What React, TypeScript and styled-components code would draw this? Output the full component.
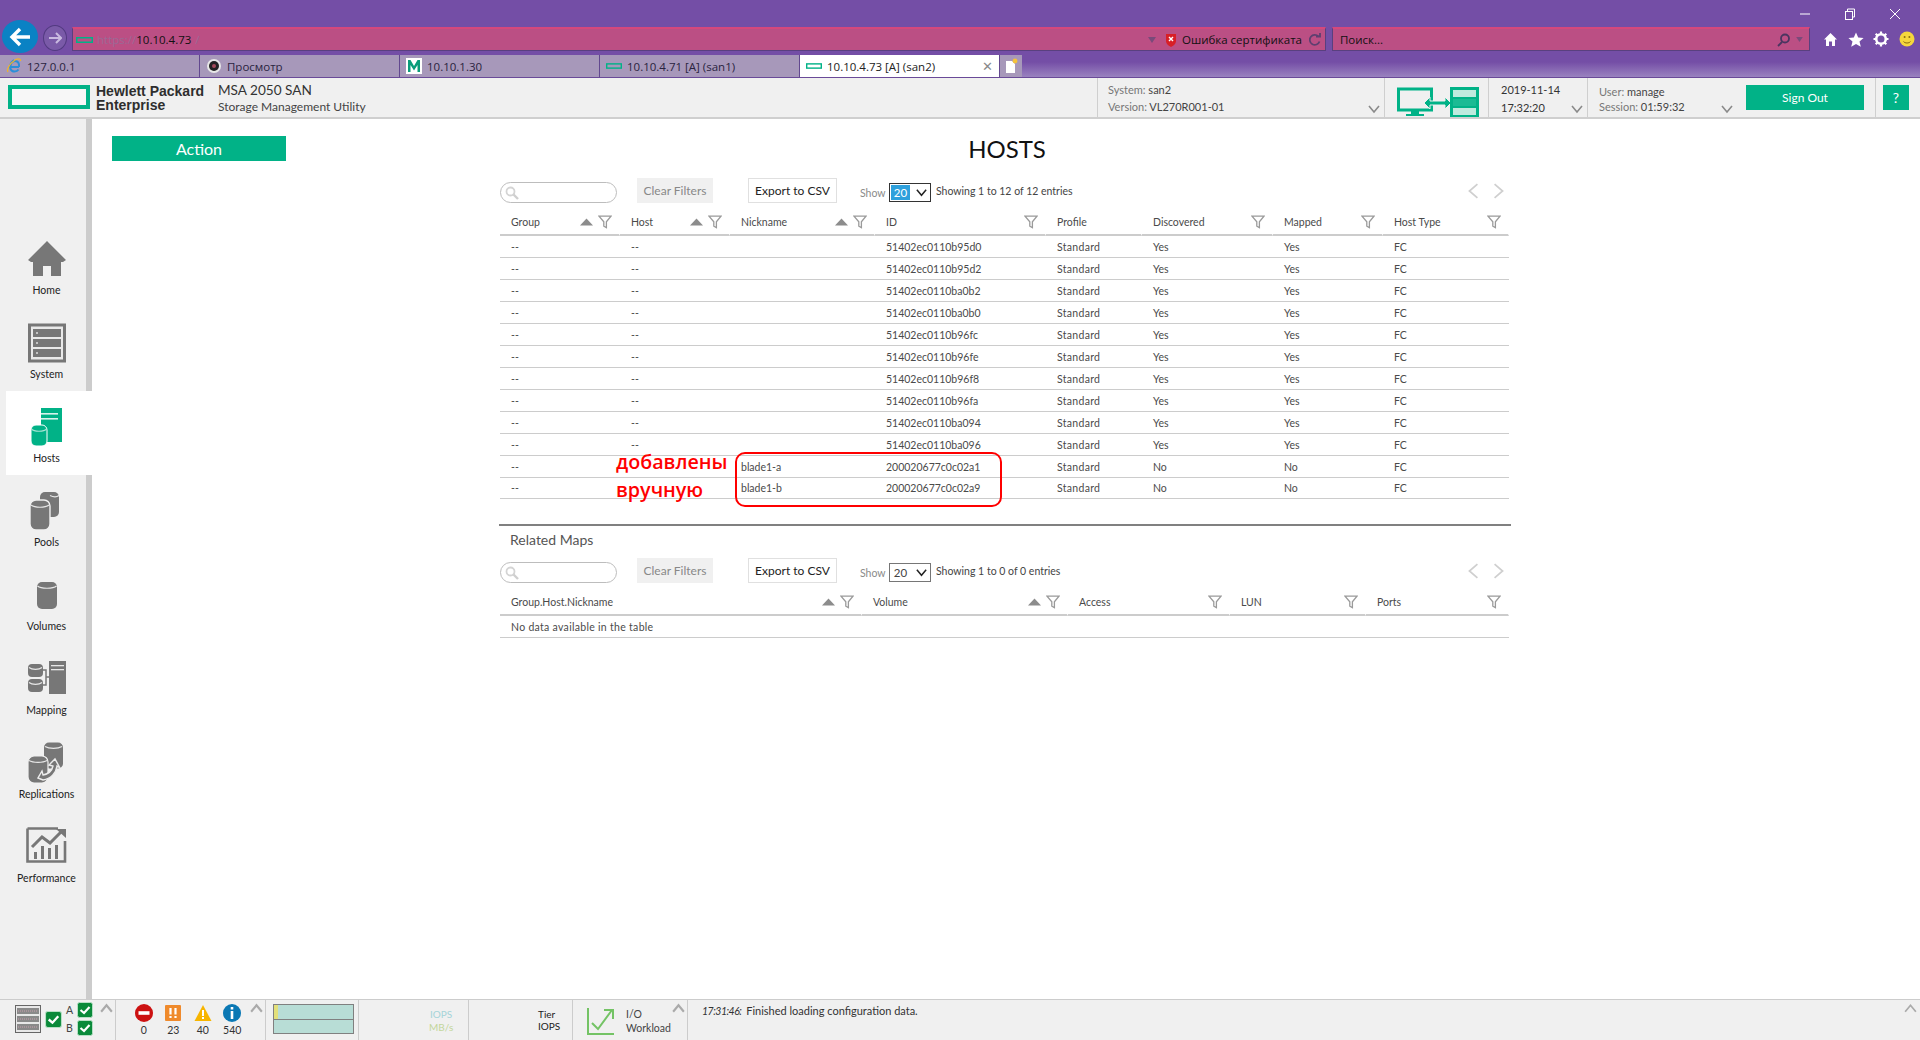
import React from 'react';
import { styled, createGlobalStyle } from 'styled-components';

const GREEN = '#01b287';

const GlobalStyle = createGlobalStyle`
    html, body {
        margin: 0;
        padding: 0;
        background: #fff;
        font-family: Lato, "Liberation Sans", sans-serif;
    }
    * { box-sizing: border-box; }
`;

/* ---------- small drawings ---------- */

function Chevron({ dir = 'down', size = 14, color = '#8a8a8a', sw = 1.6 }: { dir?: 'down' | 'up' | 'left' | 'right'; size?: number; color?: string; sw?: number }) {
    const paths = { down: 'M2 4 L7 10 L12 4', up: 'M2 10 L7 4 L12 10', left: 'M10 1 L3 7 L10 13', right: 'M4 1 L11 7 L4 13' };
    return <svg width={size} height={size} viewBox="0 0 14 14" fill="none" stroke={color} strokeWidth={sw}><path d={paths[dir]} /></svg>;
}

function HpeMark({ w = 17, h = 6 }: { w?: number; h?: number }) {
    return <svg width={w} height={h} viewBox="0 0 17 6"><rect x="0.75" y="0.75" width="15.5" height="4.5" fill="none" stroke={GREEN} strokeWidth="1.5" /></svg>;
}

function Filter() {
    return (
        <svg width="14" height="14" viewBox="0 0 14 14" fill="#fff" stroke="#9a9a9a" strokeWidth="1.3">
            <path d="M1 1.2 H13 L8.4 6.8 V12.6 L5.8 11.2 V6.8 Z" />
        </svg>
    );
}

function SortUp() {
    return <svg width="13" height="8" viewBox="0 0 13 8"><path d="M6.5 0.5 L13 7.5 H0 Z" fill="#8c8c8c" /></svg>;
}

function Magnifier() {
    return (
        <svg width="14" height="14" viewBox="0 0 14 14" fill="none">
            <circle cx="5.5" cy="5.5" r="4" stroke="#d4d4d4" strokeWidth="1.8" />
            <path d="M8.5 8.5 L13 13" stroke="#cfcfcf" strokeWidth="2.4" />
        </svg>
    );
}

const NavIcons: Record<string, React.ReactNode> = {
    Home: (
        <svg width="40" height="40" viewBox="0 0 40 40" fill="#777">
            <path d="M20 2 L39 21 L36 23 H34 V37 H24 V27 H16 V37 H6 V23 H4 L1 21 Z" />
        </svg>
    ),
    System: (
        <svg width="40" height="40" viewBox="0 0 40 40">
            <rect x="1" y="0.5" width="38" height="39" fill="#777" />
            <rect x="4" y="3.5" width="32" height="33" fill="#e9e9e9" />
            {[6, 16, 26].map((y) => (
                <g key={y}>
                    <rect x="6" y={y} width="28" height="8" fill="#777" />
                    <circle cx="10" cy={y + 4} r="1" fill="#ddd" />
                </g>
            ))}
        </svg>
    ),
    Hosts: (
        <svg width="40" height="40" viewBox="0 0 40 40">
            <rect x="14" y="1" width="21" height="34" fill={GREEN} />
            <rect x="14" y="6" width="17" height="1.6" fill="#d8f3ec" />
            <rect x="14" y="11" width="17" height="1.6" fill="#d8f3ec" />
            <rect x="4" y="18" width="16" height="21" rx="5" fill={GREEN} stroke="#fff" strokeWidth="1" />
            <path d="M4.5 22 C7 25 17 25 19.5 22" fill="none" stroke="#a5e3d4" strokeWidth="1.2" />
        </svg>
    ),
    Pools: (
        <svg width="40" height="40" viewBox="0 0 40 40" fill="#777">
            <rect x="13" y="1" width="19" height="25" rx="5" />
            <rect x="3" y="9" width="20" height="30" rx="6" stroke="#f0f0f0" strokeWidth="1.4" />
            <path d="M4 14 C8 17 18 17 22 14" fill="none" stroke="#e8e8e8" strokeWidth="1.2" />
            <path d="M23 4.5 C26 6 30 6 32 4.5" fill="none" stroke="#e8e8e8" strokeWidth="1.2" />
        </svg>
    ),
    Volumes: (
        <svg width="40" height="40" viewBox="0 0 40 40" fill="#777">
            <rect x="10" y="7" width="20" height="27" rx="5" />
            <path d="M10.5 11 C14 14 26 14 29.5 11" fill="none" stroke="#e8e8e8" strokeWidth="1.2" />
        </svg>
    ),
    Mapping: (
        <svg width="40" height="40" viewBox="0 0 40 40" fill="#777">
            <rect x="1" y="5" width="15" height="13" rx="4" />
            <rect x="1" y="20" width="15" height="13" rx="4" />
            <path d="M2 8.5 C5 11 12 11 15 8.5 M2 23.5 C5 26 12 26 15 23.5" fill="none" stroke="#e8e8e8" strokeWidth="1.1" />
            <path d="M16 11 H19 V26 H16 M19 18 H22" fill="none" stroke="#777" strokeWidth="1.5" />
            <rect x="22" y="2" width="17" height="33" />
            <rect x="24" y="6" width="13" height="1.3" fill="#e8e8e8" />
            <rect x="24" y="10" width="13" height="1.3" fill="#e8e8e8" />
        </svg>
    ),
    Replications: (
        <svg width="42" height="42" viewBox="0 0 42 42" fill="#777">
            <rect x="18" y="0.5" width="19" height="26" rx="5" />
            <rect x="2" y="14" width="20" height="27" rx="6" stroke="#f0f0f0" strokeWidth="1.2" />
            <path d="M3 18.5 C7 21 17 21 21 18.5 M19 4.5 C23 7 32 7 36 4.5" fill="none" stroke="#e8e8e8" strokeWidth="1.2" />
            <path d="M12 36 L17 38 C25 37 30 31 31 24 L34 26 L29 17 L23 23 L27 24 C26 29 22 32 17 33 L16 29 Z" fill="#777" stroke="#ececec" strokeWidth="1.4" />
        </svg>
    ),
    Performance: (
        <svg width="42" height="40" viewBox="0 0 42 40">
            <path d="M1.5 1.5 H32 M1.5 1.5 V34.5 H39 V14" fill="none" stroke="#777" strokeWidth="2.6" />
            <rect x="8" y="25" width="3" height="7" fill="#777" />
            <rect x="15" y="19" width="3" height="13" fill="#777" />
            <rect x="22" y="21" width="3" height="11" fill="#777" />
            <rect x="29" y="18" width="3" height="14" fill="#777" />
            <path d="M6 20 L16 10 L24 16 L35 5" fill="none" stroke="#777" strokeWidth="3" />
            <path d="M30 2 H40 V11 Z" fill="#777" />
        </svg>
    ),
};

/* ---------- browser chrome ---------- */

const Page = styled.div`
    width: 1920px;
    height: 1040px;
    display: flex;
    flex-direction: column;
    overflow: hidden;
`;

const BrowserChrome = styled.div`
    height: 78px;
    flex: none;
    background: linear-gradient(#744ea6 0, #744ea6 62px, #9a82bf 77px);
    border-bottom: 1px solid #6a4a98;
`;

const WindowBar = styled.div`
    height: 27px;
    display: flex;
    justify-content: flex-end;
    align-items: center;
    padding: 0 19px 0 0;
    gap: 33px;
    color: #fff;
    font-size: 14px;
`;

const AddressRow = styled.div`
    height: 28px;
    display: flex;
    align-items: flex-start;
    position: relative;
`;

const BackButton = styled.div`
    position: absolute;
    left: 2px;
    top: -7px;
    width: 36px;
    height: 33px;
    border-radius: 50%;
    background: #0a82c4;
    display: flex;
    align-items: center;
    justify-content: center;
`;

const ForwardButton = styled.div`
    position: absolute;
    left: 43px;
    top: -2px;
    width: 24px;
    height: 26px;
    border-radius: 50%;
    background: #7a5aa8;
    border: 1px solid #523a80;
    display: flex;
    align-items: center;
    justify-content: center;
`;

const UrlField = styled.div<{ $width: number; $left: number }>`
    margin-left: ${(p) => p.$left}px;
    width: ${(p) => p.$width}px;
    height: 24px;
    background: #bb4f84;
    border: 1px solid #59407f;
    border-top: 2px solid #d6487c;
    display: flex;
    align-items: center;
    padding: 0 4px 0 3px;
    font-family: "Open Sans", sans-serif;
    font-size: 11.5px;
    color: #111;
`;

const UrlDim = styled.span`
    color: #9a6a96;
    margin-left: 4px;
`;

const Spacer = styled.div`
    flex: 1;
`;

const ToolIcons = styled.div`
    display: flex;
    align-items: center;
    gap: 9.5px;
    margin-left: 13px;
    height: 24px;
`;

const TabRow = styled.div`
    height: 22px;
    display: flex;
`;

const Tab = styled.div<{ $active?: boolean }>`
    width: 200px;
    height: 22px;
    background: ${(p) => (p.$active ? '#fff' : '#a798ba')};
    border-right: 1px solid #62488f;
    display: flex;
    align-items: center;
    gap: 5px;
    padding: 0 3px 0 6px;
    font-family: "Open Sans", sans-serif;
    font-size: 11.5px;
    color: ${(p) => (p.$active ? '#222' : '#2a2340')};
`;

const TabIcon = styled.span`
    width: 16px;
    height: 16px;
    flex: none;
    display: flex;
    align-items: center;
    justify-content: center;
`;

const TabClose = styled.span`
    margin-left: auto;
    margin-right: 3px;
    color: #8a8a8a;
    font-size: 13px;
`;

const NewTab = styled.div`
    width: 22px;
    height: 22px;
    background: #a798ba;
    display: flex;
    align-items: center;
    justify-content: center;
`;

/* ---------- application header ---------- */

const AppHeader = styled.header`
    height: 41px;
    flex: none;
    background: #f0f0f0;
    border-bottom: 2px solid #cfcfcf;
    display: flex;
    color: #444;
`;

const LogoBox = styled.div`
    width: 82px;
    height: 24px;
    margin: 7px 0 0 8px;
    border: 4px solid ${GREEN};
    background: #f7f7f7;
    flex: none;
`;

const BrandText = styled.div`
    margin: 6px 0 0 6px;
    width: 122px;
    font-family: "Liberation Sans", sans-serif;
    font-size: 14px;
    font-weight: 700;
    line-height: 14px;
    color: #2e2e2e;
    flex: none;
`;

const ProductText = styled.div`
    margin-top: 4px;
    flex: 1;
`;

const ProductName = styled.div`
    font-size: 13.6px;
    line-height: 16px;
    color: #333;
`;

const ProductSub = styled.div`
    font-size: 12px;
    line-height: 18px;
    color: #444;
`;

const HeaderCell = styled.div<{ $width: number }>`
    width: ${(p) => p.$width}px;
    flex: none;
    position: relative;
    border-left: 1px solid #cfcfcf;
    font-size: 11px;
    line-height: 17px;
    padding: 3px 0 0 10px;
    white-space: nowrap;
`;

const CellLabel = styled.span`
    color: #777;
`;

const CellChevron = styled.span`
    position: absolute;
    right: 3px;
    bottom: 1px;
    display: flex;
`;

const SignOutCell = styled.div`
    width: 129px;
    flex: none;
    position: relative;
    padding: 7px 0 0 0;
`;

const GreenButton = styled.button<{ $width: number; $height: number; $size: number }>`
    width: ${(p) => p.$width}px;
    height: ${(p) => p.$height}px;
    background: ${GREEN};
    color: #fff;
    border: none;
    padding: 0;
    font-family: inherit;
    font-size: ${(p) => p.$size}px;
    display: block;
`;

const HelpCell = styled.div`
    width: 45px;
    flex: none;
    border-left: 1px solid #cfcfcf;
    padding: 7px 0 0 7px;
`;

/* ---------- body ---------- */

const Body = styled.div`
    flex: 1;
    display: flex;
    min-height: 0;
`;

const Sidebar = styled.nav`
    width: 92px;
    flex: none;
    background: #f0f0f0;
    border-right: 6px solid #ccc;
    padding: 104px 0 0 6px;
`;

const NavItem = styled.div<{ $active?: boolean }>`
    width: 86px;
    height: 84px;
    padding-top: 16px;
    padding-right: 5px;
    display: flex;
    flex-direction: column;
    align-items: center;
    background: ${(p) => (p.$active ? '#fff' : 'transparent')};
    margin-right: -6px;
`;

const NavIconBox = styled.div`
    height: 40px;
    display: flex;
    align-items: center;
    justify-content: center;
`;

const NavLabel = styled.div`
    margin-top: 4px;
    font-size: 10.5px;
    line-height: 14px;
    color: #222;
`;

const Main = styled.main`
    flex: 1;
    display: flex;
    min-width: 0;
`;

const ActionColumn = styled.div`
    width: 407px;
    flex: none;
    padding: 17px 0 0 20px;
`;

const Content = styled.div`
    width: 1012px;
    flex: none;
    position: relative;
`;

const Title = styled.h1`
    margin: 0;
    height: 59px;
    line-height: 60px;
    font-size: 24px;
    font-weight: 400;
    text-align: center;
    color: #111;
    padding-left: 4px;
`;

const Toolbar = styled.div`
    height: 25px;
    display: flex;
    align-items: center;
    padding-left: 1px;
    position: relative;
`;

const SearchPill = styled.div`
    width: 117px;
    height: 21px;
    margin-top: 4px;
    border: 1px solid #bdbdbd;
    border-radius: 11px;
    padding: 3px 0 0 4px;
    display: flex;
    background: #fff;
`;

const ClearFilters = styled.div`
    width: 76px;
    height: 25px;
    margin-left: 20px;
    background: #f0f0f0;
    color: #888;
    font-size: 12px;
    display: flex;
    align-items: center;
    justify-content: center;
`;

const ExportButton = styled.div`
    width: 89px;
    height: 25px;
    margin-left: 35px;
    border: 1px solid #e0e0e0;
    color: #222;
    font-size: 12px;
    display: flex;
    align-items: center;
    justify-content: center;
`;

const ShowLabel = styled.span`
    margin-left: 23px;
    margin-top: 5px;
    color: #8a8a8a;
    font-size: 10.5px;
    width: 29px;
`;

const SelectBox = styled.div<{ $focused?: boolean }>`
    width: 42px;
    height: 19px;
    margin-top: 3px;
    border: 1px solid ${(p) => (p.$focused ? '#333' : '#767676')};
    display: flex;
    align-items: center;
    padding: 1px 0 1px 1px;
    font-size: 11.5px;
    color: #444;
`;

const SelectValue = styled.span<{ $focused?: boolean }>`
    width: 19px;
    height: 100%;
    background: ${(p) => (p.$focused ? '#2ea0dc' : 'transparent')};
    color: ${(p) => (p.$focused ? '#fff' : '#444')};
    display: flex;
    align-items: center;
    justify-content: center;
    margin-right: 5px;
`;

const ShowingText = styled.span`
    margin-left: 5px;
    font-size: 10.5px;
    color: #444;
`;

const Pager = styled.div`
    margin-left: auto;
    margin-right: 5px;
    display: flex;
    gap: 8px;
`;

const Grid = styled.table`
    width: 1009px;
    margin-left: 1px;
    border-collapse: separate;
    border-spacing: 0;
    table-layout: fixed;
    font-size: 10.5px;
    color: #4a4a4a;
`;

const HeadCell = styled.th`
    height: 33px;
    padding: 7px 7px 0 11px;
    border-bottom: 2px solid #ccc;
    border-right: 1px solid #fff;
    font-weight: 400;
    text-align: left;
`;

const HeadInner = styled.div`
    display: flex;
    align-items: center;
    gap: 5px;
`;

const HeadText = styled.span`
    flex: 1;
    white-space: nowrap;
`;

const BodyCell = styled.td<{ $compact?: boolean; $spread?: boolean }>`
    height: ${(p) => (p.$compact ? 21 : 22)}px;
    padding: 0 0 0 11px;
    border-bottom: 1px solid #ccc;
    white-space: nowrap;
    letter-spacing: ${(p) => (p.$spread ? '0.3px' : 'normal')};
`;

const TableWrap = styled.div`
    position: relative;
`;

const Divider = styled.div`
    height: 2px;
    margin-top: 25px;
    background: #808080;
`;

const SectionTitle = styled.div`
    height: 32px;
    line-height: 27px;
    padding-left: 11px;
    font-size: 14px;
    color: #555;
`;

const Highlight = styled.div`
    position: absolute;
    left: 236px;
    top: 333px;
    width: 267px;
    height: 55px;
    border: 2px solid #f00;
    border-radius: 10px;
    pointer-events: none;
`;

const Note = styled.div<{ $top: number }>`
    position: absolute;
    left: 117px;
    top: ${(p) => p.$top}px;
    font-family: "Open Sans", sans-serif;
    font-size: 19.7px;
    font-weight: 600;
    line-height: 26px;
    color: #f00;
`;

/* ---------- status bar ---------- */

const StatusBar = styled.footer`
    height: 41px;
    flex: none;
    background: #f0f0f0;
    border-top: 1px solid #ccc;
    display: flex;
    color: #333;
    font-size: 10.5px;
    position: relative;
`;

const StatusCell = styled.div<{ $width: number }>`
    width: ${(p) => p.$width}px;
    flex: none;
    position: relative;
    border-right: 1px solid #ccc;
    display: flex;
`;

const CornerChevron = styled.span<{ $right: number }>`
    position: absolute;
    right: ${(p) => p.$right}px;
    top: 1px;
    display: flex;
`;

const ControllerColumn = styled.div`
    display: flex;
    flex-direction: column;
    gap: 2px;
    margin: 2px 0 0 4px;
`;

const ControllerRow = styled.div`
    display: flex;
    align-items: center;
    gap: 4px;
    font-size: 10.5px;
    color: #444;
`;

const Alert = styled.div`
    width: 29.5px;
    display: flex;
    flex-direction: column;
    align-items: center;
    padding-top: 4px;
`;

const AlertCount = styled.span`
    margin-top: 1px;
    font-size: 10.5px;
    line-height: 14px;
    color: #333;
`;

const AlertRow = styled.div`
    display: flex;
    margin-left: 13px;
`;

const ChartBox = styled.div`
    width: 81px;
    height: 30px;
    margin: 4px 0 0 7px;
    border: 1px solid #808080;
    background: #b8ddd6;
    position: relative;
    display: flex;
    flex-direction: column;
`;

const ChartHalf = styled.div`
    flex: 1;
    border-bottom: 1px solid #808080;
`;

const ChartTick = styled.div`
    position: absolute;
    left: 0;
    top: 0;
    width: 4px;
    height: 14px;
    background: #e3e07a;
`;

const MetricLegend = styled.div`
    margin: 8px 0 0 70px;
    line-height: 13px;
    font-size: 10px;
    text-align: center;
`;

const MetricLine = styled.div<{ $color: string }>`
    color: ${(p) => p.$color};
`;

const TierText = styled.div`
    margin: 8px 0 0 69px;
    font-size: 10px;
    line-height: 12px;
    color: #222;
`;

const WorkloadText = styled.div`
    margin: 7px 0 0 11px;
    font-size: 10.5px;
    line-height: 14px;
    color: #444;
`;

const Message = styled.div`
    margin: 4px 0 0 14px;
    font-size: 11px;
    line-height: 14px;
    color: #333;
`;

const MessageTime = styled.span`
    font-style: italic;
    font-size: 10.5px;
    letter-spacing: -0.5px;
    margin-right: 2px;
`;

function CheckBadge({ size = 16 }: { size?: number }) {
    return (
        <svg width={size} height={size} viewBox="0 0 16 16">
            <rect x="0.5" y="0.5" width="15" height="15" rx="2" fill="#0a8a3a" stroke="#b7dfc5" />
            <path d="M3.5 8 L7 11 L12.5 5" fill="none" stroke="#fff" strokeWidth="2.2" />
        </svg>
    );
}

/* ---------- data ---------- */

const hostIds = ['51402ec0110b95d0', '51402ec0110b95d2', '51402ec0110ba0b2', '51402ec0110ba0b0', '51402ec0110b96fc', '51402ec0110b96fe', '51402ec0110b96f8', '51402ec0110b96fa', '51402ec0110ba094', '51402ec0110ba096'];

type Column = { title: string; width: number; sort?: boolean; filter?: boolean };

const hostColumns: Column[] = [
    { title: 'Group', width: 120, sort: true, filter: true },
    { title: 'Host', width: 110, sort: true, filter: true },
    { title: 'Nickname', width: 145, sort: true, filter: true },
    { title: 'ID', width: 171, filter: true },
    { title: 'Profile', width: 96 },
    { title: 'Discovered', width: 131, filter: true },
    { title: 'Mapped', width: 110, filter: true },
    { title: 'Host Type', width: 126, filter: true },
];

const mapColumns: Column[] = [
    { title: 'Group.Host.Nickname', width: 362, sort: true, filter: true },
    { title: 'Volume', width: 206, sort: true, filter: true },
    { title: 'Access', width: 162, filter: true },
    { title: 'LUN', width: 136, filter: true },
    { title: 'Ports', width: 143, filter: true },
];

const navItems = ['Home', 'System', 'Hosts', 'Pools', 'Volumes', 'Mapping', 'Replications', 'Performance'];

function TableHead({ columns }: { columns: Column[] }) {
    return (
        <>
            <colgroup>
                {columns.map((c) => <col key={c.title} width={c.width} />)}
            </colgroup>
            <thead>
                <tr>
                    {columns.map((c) => (
                        <HeadCell key={c.title}>
                            <HeadInner>
                                <HeadText>{c.title}</HeadText>
                                {c.sort && <SortUp />}
                                {c.filter && <Filter />}
                            </HeadInner>
                        </HeadCell>
                    ))}
                </tr>
            </thead>
        </>
    );
}

function TableToolbar({ focused, showing }: { focused?: boolean; showing: string }) {
    return (
        <Toolbar>
            <SearchPill><Magnifier /></SearchPill>
            <ClearFilters>Clear Filters</ClearFilters>
            <ExportButton>Export to CSV</ExportButton>
            <ShowLabel>Show</ShowLabel>
            <SelectBox $focused={focused}>
                <SelectValue $focused={focused}>20</SelectValue>
                <Chevron size={13} color="#222" sw={1.6} />
            </SelectBox>
            <ShowingText>{showing}</ShowingText>
            <Pager>
                <Chevron dir="left" size={16} color="#cfcfcf" sw={1.5} />
                <Chevron dir="right" size={16} color="#cfcfcf" sw={1.5} />
            </Pager>
        </Toolbar>
    );
}

export default function App() {
    return (
        <Page>
            <GlobalStyle />
            <BrowserChrome>
                <WindowBar>
                    <svg width="12" height="12" viewBox="0 0 12 12"><path d="M1 6 H11" stroke="#fff" strokeWidth="1" /></svg>
                    <svg width="12" height="12" viewBox="0 0 12 12" fill="none" stroke="#fff"><rect x="1.5" y="3.5" width="7" height="8" /><path d="M3.5 3.5 V1 H10.5 V9 H8.5" /></svg>
                    <svg width="12" height="12" viewBox="0 0 12 12"><path d="M1 1 L11 11 M11 1 L1 11" stroke="#fff" strokeWidth="1" /></svg>
                </WindowBar>
                <AddressRow>
                    <BackButton>
                        <svg width="22" height="20" viewBox="0 0 22 20" fill="none" stroke="#fff" strokeWidth="3.4"><path d="M11 2 L3 10 L11 18 M3 10 H21" /></svg>
                    </BackButton>
                    <ForwardButton>
                        <svg width="14" height="12" viewBox="0 0 14 12" fill="none" stroke="#c9b9e0" strokeWidth="2"><path d="M8 1 L13 6 L8 11 M13 6 H1" /></svg>
                    </ForwardButton>
                    <UrlField $left={72} $width={1254}>
                        <HpeMark />
                        <UrlDim>https://</UrlDim>10.10.4.73<UrlDim>/</UrlDim>
                        <Spacer />
                        <svg width="8" height="6" viewBox="0 0 8 6"><path d="M0 0 H8 L4 6 Z" fill="#7a4a7a" /></svg>
                        <svg style={{ margin: '0 5px 0 9px' }} width="12" height="14" viewBox="0 0 12 14">
                            <path d="M1 1 H11 V8 C11 11 8 13 6 14 C4 13 1 11 1 8 Z" fill="#d81f26" />
                            <path d="M4 4 L8 8 M8 4 L4 8" stroke="#fff" strokeWidth="1.4" />
                        </svg>
                        Ошибка сертификата
                        <svg style={{ marginLeft: 7 }} width="12" height="14" viewBox="0 0 12 14" fill="none" stroke="#5e3f70" strokeWidth="1.8"><path d="M9.5 3.5 A5 5 0 1 0 10.5 8.5" /><path d="M7 3.5 H11 V0" /></svg>
                    </UrlField>
                    <UrlField $left={6} $width={478} style={{ paddingLeft: 7 }}>
                        Поиск...
                        <Spacer />
                        <svg width="14" height="14" viewBox="0 0 14 14" fill="none" stroke="#4a3560" strokeWidth="1.8"><circle cx="8" cy="5.5" r="4" /><path d="M5 9 L1 13" /></svg>
                        <svg style={{ margin: '0 2px 0 5px' }} width="7" height="5" viewBox="0 0 8 6"><path d="M0 0 H8 L4 6 Z" fill="#7a4a7a" /></svg>
                    </UrlField>
                    <ToolIcons>
                        <svg width="15" height="15" viewBox="0 0 15 15" fill="#fff"><path d="M7.5 1 L14 7.5 H12 V14 H9 V9.5 H6 V14 H3 V7.5 H1 Z" /></svg>
                        <svg width="16" height="15" viewBox="0 0 16 15" fill="#fff"><path d="M8 0.5 L10.2 5.5 L15.6 6 L11.5 9.5 L12.8 14.8 L8 12 L3.2 14.8 L4.5 9.5 L0.4 6 L5.8 5.5 Z" /></svg>
                        <svg width="16" height="16" viewBox="0 0 16 16"><circle cx="8" cy="8" r="4.8" fill="none" stroke="#fff" strokeWidth="2.6" /><path d="M8 0.5 V3 M8 13 V15.5 M0.5 8 H3 M13 8 H15.5 M2.7 2.7 L4.5 4.5 M11.5 11.5 L13.3 13.3 M13.3 2.7 L11.5 4.5 M4.5 11.5 L2.7 13.3" stroke="#fff" strokeWidth="2.2" /></svg>
                        <svg width="16" height="16" viewBox="0 0 16 16"><circle cx="8" cy="8" r="7.5" fill="#f5d73c" /><circle cx="5.6" cy="6" r="1" fill="#8a6d10" /><circle cx="10.4" cy="6" r="1" fill="#8a6d10" /><path d="M4.5 10.5 C6 12.5 10 12.5 11.5 10.5" fill="none" stroke="#8a6d10" /></svg>
                    </ToolIcons>
                </AddressRow>
                <TabRow>
                    <Tab>
                        <TabIcon>
                            <svg width="16" height="16" viewBox="0 0 16 16" fill="none"><path d="M13 9 H5 M4.5 8 C4.5 3 9 2.5 11 3.5 C13 4.5 13.2 7 13 9 M12.5 11.5 C11 14 6 14.5 4.5 11 C3.5 9 4 5 8 2" stroke="#2b8fd8" strokeWidth="2" /><path d="M2 14 C0.5 12 3 6 9 2 C12 0.5 15 0.5 14.5 3" stroke="#f0b429" strokeWidth="1.2" /></svg>
                        </TabIcon>
                        127.0.0.1
                    </Tab>
                    <Tab>
                        <TabIcon>
                            <svg width="16" height="16" viewBox="0 0 16 16"><circle cx="8" cy="8" r="7" fill="#e8e8e8" /><circle cx="8" cy="8" r="5" fill="#222" /><circle cx="8" cy="8" r="2" fill="#a34a5a" /></svg>
                        </TabIcon>
                        Просмотр
                    </Tab>
                    <Tab>
                        <TabIcon style={{ background: '#fff' }}>
                            <svg width="14" height="12" viewBox="0 0 14 12"><path d="M1 12 V0 H3.5 L7 6 L10.5 0 H13 V12 H10.5 V5 L7 10.5 L3.5 5 V12 Z" fill="#0a9c7a" /></svg>
                        </TabIcon>
                        10.10.1.30
                    </Tab>
                    <Tab>
                        <TabIcon><HpeMark /></TabIcon>
                        10.10.4.71 [A] (san1)
                    </Tab>
                    <Tab $active>
                        <TabIcon><HpeMark /></TabIcon>
                        10.10.4.73 [A] (san2)
                        <TabClose>✕</TabClose>
                    </Tab>
                    <NewTab>
                        <svg width="14" height="16" viewBox="0 0 14 16"><path d="M2 3 H8 L11 6 V15 H2 Z" fill="#fff" /><circle cx="11" cy="3" r="2.4" fill="#f5c33b" /></svg>
                    </NewTab>
                </TabRow>
            </BrowserChrome>

            <AppHeader>
                <LogoBox />
                <BrandText>Hewlett Packard<br />Enterprise</BrandText>
                <ProductText>
                    <ProductName>MSA 2050 SAN</ProductName>
                    <ProductSub>Storage Management Utility</ProductSub>
                </ProductText>
                <HeaderCell $width={287}>
                    <CellLabel>System:</CellLabel> san2<br />
                    <CellLabel>Version:</CellLabel> VL270R001-01
                    <CellChevron><Chevron size={14} /></CellChevron>
                </HeaderCell>
                <HeaderCell $width={104} style={{ padding: '8px 0 0 12px' }}>
                    <svg width="82" height="31" viewBox="0 0 82 31">
                        <rect x="1.5" y="3" width="33" height="21" fill="none" stroke={GREEN} strokeWidth="3" />
                        <path d="M14 24 H22 V28 H27 V30 H9 V28 H14 Z" fill={GREEN} />
                        <path d="M27 17 L33 11 V15 H48 V11 L54 17 L48 23 V19 H33 V23 Z" fill={GREEN} stroke="#f0f0f0" strokeWidth="1" />
                        <rect x="53" y="1" width="29" height="30" fill={GREEN} />
                        <rect x="56" y="4" width="23" height="7" fill="#bfeade" />
                        <rect x="56" y="13" width="23" height="7" fill="#1bbb94" />
                        <rect x="56" y="22" width="23" height="7" fill="#bfeade" />
                    </svg>
                </HeaderCell>
                <HeaderCell $width={99} style={{ paddingLeft: 12, color: '#333', lineHeight: '18px' }}>
                    2019-11-14<br />17:32:20
                    <CellChevron><Chevron size={14} /></CellChevron>
                </HeaderCell>
                <HeaderCell $width={159} style={{ paddingTop: 6, lineHeight: '15px', paddingLeft: 11 }}>
                    <CellLabel>User:</CellLabel> manage<br />
                    <CellLabel>Session:</CellLabel> 01:59:32
                    <CellChevron style={{ right: 12 }}><Chevron size={14} /></CellChevron>
                </HeaderCell>
                <SignOutCell>
                    <GreenButton $width={118} $height={25} $size={12}>Sign Out</GreenButton>
                </SignOutCell>
                <HelpCell>
                    <GreenButton $width={26} $height={25} $size={14}>?</GreenButton>
                </HelpCell>
            </AppHeader>

            <Body>
                <Sidebar>
                    {navItems.map((name) => (
                        <NavItem key={name} $active={name === 'Hosts'}>
                            <NavIconBox>{NavIcons[name]}</NavIconBox>
                            <NavLabel>{name}</NavLabel>
                        </NavItem>
                    ))}
                </Sidebar>
                <Main>
                    <ActionColumn>
                        <GreenButton $width={174} $height={25} $size={16}>Action</GreenButton>
                    </ActionColumn>
                    <Content>
                        <Title>HOSTS</Title>
                        <TableToolbar focused showing="Showing 1 to 12 of 12 entries" />
                        <TableWrap>
                            <Grid>
                                <TableHead columns={hostColumns} />
                                <tbody>
                                    {hostIds.map((id) => (
                                        <tr key={id}>
                                            <BodyCell>--</BodyCell>
                                            <BodyCell>--</BodyCell>
                                            <BodyCell />
                                            <BodyCell>{id}</BodyCell>
                                            <BodyCell $spread>Standard</BodyCell>
                                            <BodyCell>Yes</BodyCell>
                                            <BodyCell>Yes</BodyCell>
                                            <BodyCell>FC</BodyCell>
                                        </tr>
                                    ))}
                                    {[['blade1-a', '200020677c0c02a1'], ['blade1-b', '200020677c0c02a9']].map(([nick, id], i) => (
                                        <tr key={id}>
                                            <BodyCell $compact={i === 1}>--</BodyCell>
                                            <BodyCell $compact={i === 1} />
                                            <BodyCell $compact={i === 1}>{nick}</BodyCell>
                                            <BodyCell $compact={i === 1}>{id}</BodyCell>
                                            <BodyCell $compact={i === 1} $spread>Standard</BodyCell>
                                            <BodyCell $compact={i === 1}>No</BodyCell>
                                            <BodyCell $compact={i === 1}>No</BodyCell>
                                            <BodyCell $compact={i === 1}>FC</BodyCell>
                                        </tr>
                                    ))}
                                </tbody>
                            </Grid>
                        </TableWrap>
                        <Divider />
                        <SectionTitle>Related Maps</SectionTitle>
                        <TableToolbar showing="Showing 1 to 0 of 0 entries" />
                        <Grid>
                            <TableHead columns={mapColumns} />
                            <tbody>
                                <tr>
                                    <BodyCell colSpan={5} $spread>No data available in the table</BodyCell>
                                </tr>
                            </tbody>
                        </Grid>
                        <Highlight />
                        <Note $top={330}>добавлены</Note>
                        <Note $top={358}>вручную</Note>
                    </Content>
                </Main>
            </Body>

            <StatusBar>
                <StatusCell $width={116}>
                    <svg style={{ margin: '5px 0 0 15px' }} width="26" height="28" viewBox="0 0 26 28">
                        <rect x="0.5" y="0.5" width="25" height="27" fill="#e8e8e8" stroke="#666" />
                        {[3, 11, 19].map((y) => (
                            <g key={y}>
                                <rect x="2" y={y} width="22" height="6" fill="#8a8a8a" />
                                <path d={`M3 ${y + 3} H23`} stroke="#c9a0ae" strokeDasharray="1 1" />
                            </g>
                        ))}
                    </svg>
                    <span style={{ margin: '11px 0 0 4px', display: 'flex', height: 17 }}><CheckBadge size={17} /></span>
                    <ControllerColumn>
                        <ControllerRow>A <CheckBadge /></ControllerRow>
                        <ControllerRow>B <CheckBadge /></ControllerRow>
                    </ControllerColumn>
                    <CornerChevron $right={1}><Chevron dir="up" size={15} color="#aaa" sw={2} /></CornerChevron>
                </StatusCell>
                <StatusCell $width={150}>
                    <AlertRow>
                        <Alert>
                            <svg width="18" height="18" viewBox="0 0 18 18"><circle cx="9" cy="9" r="9" fill="#cc1111" /><rect x="3.5" y="7.2" width="11" height="3.6" fill="#fff" /></svg>
                            <AlertCount>0</AlertCount>
                        </Alert>
                        <Alert>
                            <svg width="18" height="18" viewBox="0 0 18 18"><rect x="1" y="1" width="16" height="16" rx="1" fill="#ef8a2c" /><path d="M6.5 4 V10.5 M11.5 4 V10.5 M6.5 12 V14 M11.5 12 V14" stroke="#fff" strokeWidth="2.2" /></svg>
                            <AlertCount>23</AlertCount>
                        </Alert>
                        <Alert>
                            <svg width="18" height="18" viewBox="0 0 18 18"><path d="M9 1 L17.5 17 H0.5 Z" fill="#f7b500" /><path d="M9 6 V12 M9 13 V15" stroke="#fff" strokeWidth="2" /></svg>
                            <AlertCount>40</AlertCount>
                        </Alert>
                        <Alert>
                            <svg width="18" height="18" viewBox="0 0 18 18"><circle cx="9" cy="9" r="9" fill="#0a78b4" /><path d="M9 7 V15 M9 3 V5.5" stroke="#fff" strokeWidth="2.6" /></svg>
                            <AlertCount>540</AlertCount>
                        </Alert>
                    </AlertRow>
                    <CornerChevron $right={1}><Chevron dir="up" size={15} color="#aaa" sw={2} /></CornerChevron>
                </StatusCell>
                <StatusCell $width={93}>
                    <ChartBox>
                        <ChartTick />
                        <ChartHalf />
                        <ChartHalf style={{ borderBottom: 'none' }} />
                    </ChartBox>
                </StatusCell>
                <StatusCell $width={110}>
                    <MetricLegend>
                        <MetricLine $color="#a4d4d8">IOPS</MetricLine>
                        <MetricLine $color="#c3d69b">MB/s</MetricLine>
                    </MetricLegend>
                </StatusCell>
                <StatusCell $width={104}>
                    <TierText>Tier<br />IOPS</TierText>
                </StatusCell>
                <StatusCell $width={115}>
                    <svg style={{ margin: '7px 0 0 14px' }} width="28" height="28" viewBox="0 0 28 28" fill="none" stroke="#74c365" strokeWidth="2">
                        <path d="M1 1 V27 H27" />
                        <path d="M5 16 L11 22 L25 3" />
                        <path d="M17 3 H26 V12" />
                    </svg>
                    <WorkloadText>I/O<br />Workload</WorkloadText>
                    <CornerChevron $right={1}><Chevron dir="up" size={15} color="#aaa" sw={2} /></CornerChevron>
                </StatusCell>
                <Message><MessageTime>17:31:46:</MessageTime> Finished loading configuration data.</Message>
                <CornerChevron $right={2}><Chevron dir="up" size={15} color="#aaa" sw={1.6} /></CornerChevron>
            </StatusBar>
        </Page>
    );
}
